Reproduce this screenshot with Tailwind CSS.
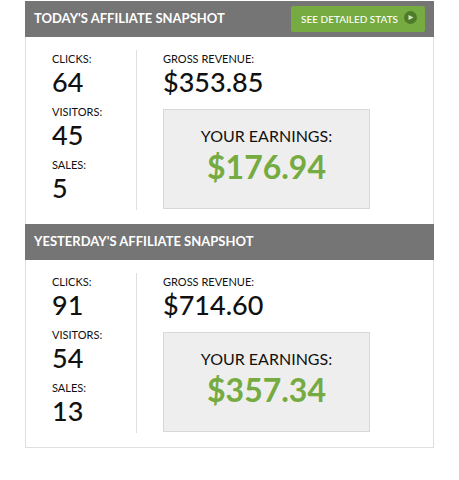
<!DOCTYPE html>
<html lang="en">
  <head>
    <meta charset="UTF-8" />
    <meta name="viewport" content="width=device-width, initial-scale=1.0" />
    <script src="https://cdn.jsdelivr.net/npm/@tailwindcss/browser@4"></script>
    <title>Affiliate Snapshot</title>
  </head>
  <body class="bg-white font-['Lato',sans-serif] text-[#111111]">
    <main class="mt-px mx-[25px] border-x border-b border-[#dfdfdf]">
      <!-- Today -->
      <section>
        <div class="-mx-px flex h-[36px] items-center justify-between bg-[#757575] px-[9px]">
          <h2 class="text-[13px] font-bold text-white">TODAY'S AFFILIATE SNAPSHOT</h2>
          <a href="#" class="flex h-[26px] items-center gap-[6px] rounded-xs bg-[#75ab41] pl-[10px] pr-[8px] text-[10px] font-medium text-white">
            <span>SEE DETAILED STATS</span>
            <svg class="-mt-1 h-[13px] w-[13px]" viewBox="0 0 13 13">
              <circle cx="6.5" cy="6.5" r="6.5" fill="#4e7c29" />
              <path d="M4.5 4L9.5 6.5L4.5 9Z" fill="#d5e6c5" />
            </svg>
          </a>
        </div>
        <div class="flex px-[26px] pt-[13px] pb-[14px]">
          <dl class="w-[85px] border-r border-[#dfdfdf] pb-[6px]">
            <dt class="pt-[2px] text-[11px] leading-[14px]">CLICKS:</dt>
            <dd class="mb-[5px] text-[27px] leading-[32px] font-medium">64</dd>
            <dt class="pt-[2px] text-[11px] leading-[14px]">VISITORS:</dt>
            <dd class="mb-[5px] text-[27px] leading-[32px] font-medium">45</dd>
            <dt class="pt-[2px] text-[11px] leading-[14px]">SALES:</dt>
            <dd class="text-[27px] leading-[32px] font-medium">5</dd>
          </dl>
          <div class="ml-[26px] flex-1">
            <div class="pt-[2px] text-[11px] leading-[14px]">GROSS REVENUE:</div>
            <div class="text-[27px] leading-[32px] font-medium">$353.85</div>
            <div class="mt-[11px] h-[100px] max-w-[207px] border border-[#d8d8d8] bg-[#eeeeee] pt-[15px] text-center">
              <div class="text-base leading-[22px]">YOUR EARNINGS:</div>
              <div class="text-[32px] leading-[40px] font-bold text-[#75ab41]">$176.94</div>
            </div>
          </div>
        </div>
      </section>

      <!-- Yesterday -->
      <section>
        <div class="-mx-px flex h-[36px] items-center bg-[#757575] px-[9px]">
          <h2 class="text-[13px] font-bold text-white">YESTERDAY'S AFFILIATE SNAPSHOT</h2>
        </div>
        <div class="flex px-[26px] pt-[13px] pb-[14px]">
          <dl class="w-[85px] border-r border-[#dfdfdf] pb-[6px]">
            <dt class="pt-[2px] text-[11px] leading-[14px]">CLICKS:</dt>
            <dd class="mb-[5px] text-[27px] leading-[32px] font-medium">91</dd>
            <dt class="pt-[2px] text-[11px] leading-[14px]">VISITORS:</dt>
            <dd class="mb-[5px] text-[27px] leading-[32px] font-medium">54</dd>
            <dt class="pt-[2px] text-[11px] leading-[14px]">SALES:</dt>
            <dd class="text-[27px] leading-[32px] font-medium">13</dd>
          </dl>
          <div class="ml-[26px] flex-1">
            <div class="pt-[2px] text-[11px] leading-[14px]">GROSS REVENUE:</div>
            <div class="text-[27px] leading-[32px] font-medium">$714.60</div>
            <div class="mt-[11px] h-[100px] max-w-[207px] border border-[#d8d8d8] bg-[#eeeeee] pt-[15px] text-center">
              <div class="text-base leading-[22px]">YOUR EARNINGS:</div>
              <div class="text-[32px] leading-[40px] font-bold text-[#75ab41]">$357.34</div>
            </div>
          </div>
        </div>
      </section>
    </main>
  </body>
</html>
